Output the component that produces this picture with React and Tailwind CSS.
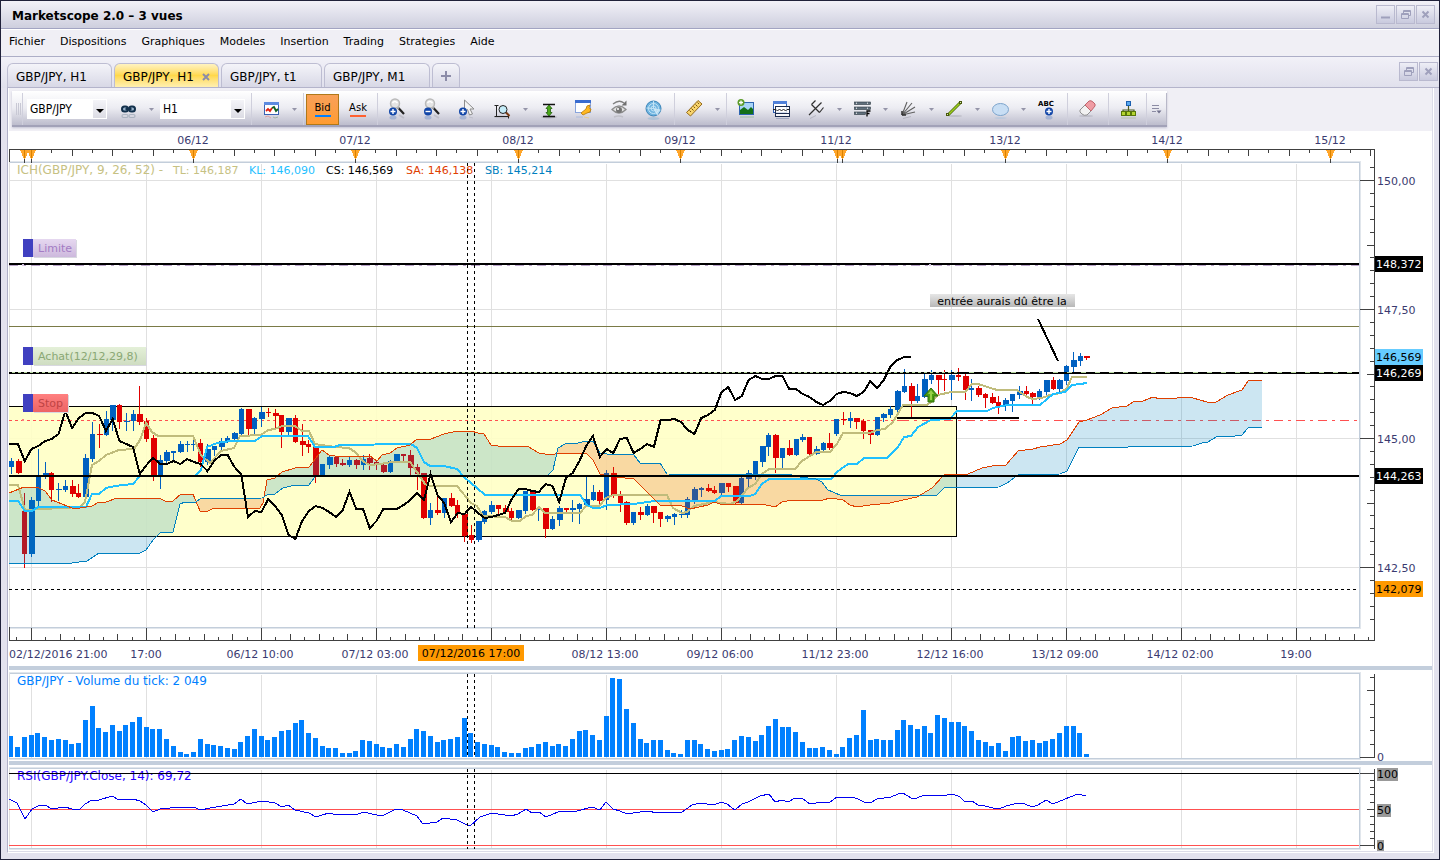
// src/App.jsx
import React from 'react';

const MENU = ['Fichier', 'Dispositions', 'Graphiques', 'Modeles', 'Insertion', 'Trading', 'Strategies', 'Aide'];

// Horizontal position of bar n, one bar per hour
const barX = (n) => 11.2 + 6.765 * n;

// colour, high, body top, body bottom, low
const CANDLES = `b 458 461 467 473|r 459 461 473 473|r 493 511 554 567|b 497 500 554 556|b 449 476 501 507|b 462 473 477 478|r 472 473 490 501|b 483 489 490 500|b 480 486 490 491|r 480 486 494 496|r 484 493 497 497|b 454 458 497 497|b 422 434 459 461|r 424 434 435 447|b 411 419 435 435|b 405 405 420 430|r 404 405 422 428|b 413 421 422 430|b 410 414 421 430|r 386 414 422 424|r 418 421 439 441|r 435 438 475 480|b 455 460 475 488|b 450 452 461 463|b 451 451 453 461|b 441 444 452 452|b 441 444 445 451|b 440 444 445 450|r 439 443 462 466|b 444 449 462 464|b 446 446 450 455|b 438 441 447 451|b 436 438 441 442|b 432 433 439 440|b 408 409 434 434|r 409 409 429 435|b 417 418 429 433|b 407 412 419 426|r 408 412 413 416|r 409 413 416 428|r 415 415 432 447|b 418 418 432 435|r 415 418 442 442|r 424 441 445 455|r 440 444 447 452|r 447 447 475 482|b 464 464 475 475|b 456 457 465 468|r 456 457 464 466|r 459 463 465 465|b 457 460 465 466|r 459 460 465 468|b 455 459 465 469|r 454 458 463 469|r 460 462 464 469|r 464 465 472 472|b 460 461 472 472|b 454 454 461 462|r 454 454 456 461|r 450 455 468 474|r 464 467 474 489|r 473 473 518 518|b 503 510 518 524|r 494 510 513 514|b 498 498 513 517|r 493 498 506 506|r 500 505 514 517|r 514 514 536 541|r 525 535 540 542|b 521 521 540 541|b 510 511 522 523|b 501 505 512 513|r 505 505 509 513|r 505 508 512 513|r 508 511 518 519|b 510 510 518 518|b 491 491 511 513|r 490 492 510 510|b 508 509 510 520|r 508 508 529 537|b 516 519 529 529|b 506 508 520 525|r 508 508 510 512|b 500 508 510 521|b 503 504 509 523|b 476 499 505 506|b 485 492 500 500|r 490 492 501 505|b 470 473 500 509|r 467 473 495 497|r 491 495 503 511|r 501 502 523 524|b 512 512 523 524|r 507 512 515 519|b 504 506 515 515|r 506 506 513 522|r 512 512 519 526|b 515 516 519 521|b 513 514 517 524|b 510 514 515 517|b 497 499 515 517|b 487 489 500 503|b 487 488 490 496|r 484 488 491 491|r 486 490 493 493|b 483 483 493 496|r 483 483 487 491|r 486 486 503 504|b 475 478 503 503|b 470 473 479 486|b 461 461 476 479|b 446 446 462 466|b 433 435 447 455|r 434 435 458 472|b 448 448 458 467|r 440 448 455 455|b 439 439 455 455|b 434 437 440 441|r 437 437 454 454|b 446 449 454 454|b 442 443 450 450|r 433 443 448 449|b 419 419 434 435|r 412 419 420 424|b 412 418 421 427|r 418 418 422 428|r 419 421 431 438|r 430 430 435 443|b 417 417 435 435|b 413 414 418 421|b 406 409 415 417|b 390 391 410 414|b 369 386 392 392|r 383 386 401 416|b 384 396 401 402|b 373 379 397 397|b 370 375 380 383|r 375 375 380 394|r 370 379 380 390|b 370 375 380 399|r 368 375 377 380|r 374 376 390 399|b 379 388 390 400|r 386 388 395 396|r 393 394 398 407|r 393 397 403 403|r 396 402 406 413|b 398 400 405 410|b 394 394 401 411|b 386 391 395 398|r 386 391 394 395|r 392 393 397 403|b 389 391 397 399|b 380 380 392 395|r 377 380 389 389|b 379 380 389 391|b 365 366 381 384|b 352 360 367 372|b 353 356 361 365|r 356 356 358 359`
  .split('|')
  .map((row) => {
    const [tone, ...v] = row.split(' ');
    return [tone, ...v.map(Number)];
  });

const VOLUME = [
  21, 10, 20, 22, 24, 20, 17, 18, 17, 13, 14, 37, 51, 29, 25, 32, 26, 32, 35, 40, 30, 28, 28, 18, 11, 5, 3, 5, 18, 13,
  12, 11, 9, 8, 15, 21, 28, 21, 17, 20, 26, 27, 34, 37, 24, 19, 11, 9, 9, 4, 4, 6, 17, 16, 13, 10, 9, 13, 10, 18, 28,
  26, 21, 15, 17, 18, 20, 39, 24, 15, 13, 12, 10, 5, 4, 4, 9, 10, 13, 15, 11, 13, 11, 18, 26, 27, 22, 17, 41, 79, 78,
  48, 34, 18, 14, 17, 17, 7, 4, 3, 17, 17, 13, 8, 6, 7, 8, 17, 21, 20, 16, 22, 31, 38, 30, 30, 25, 15, 9, 9, 10, 7, 3,
  10, 19, 22, 47, 17, 18, 17, 17, 27, 37, 32, 28, 31, 24, 42, 39, 35, 35, 31, 26, 17, 15, 11, 14, 6, 20, 21, 16, 17,
  14, 16, 18, 24, 31, 31, 24, 3,
];

const CHIKOU = [
  444, 444, 461, 449, 446, 441, 439, 434, 411, 428, 418, 413, 413, 416, 431, 419, 441, 444, 447, 474, 465, 458, 464,
  464, 461, 464, 459, 462, 464, 471, 461, 455, 455, 467, 474, 517, 511, 512, 499, 506, 515, 535, 539, 521, 511, 506,
  508, 512, 517, 510, 492, 509, 509, 528, 521, 509, 509, 509, 505, 500, 493, 500, 474, 495, 503, 522, 513, 514, 507,
  513, 518, 517, 515, 513, 499, 489, 489, 491, 492, 484, 486, 502, 478, 473, 461, 446, 436, 457, 449, 453, 439, 438,
  453, 449, 444, 447, 420, 420, 419, 422, 430, 434, 418, 415, 410, 392, 387, 400, 396, 380, 376, 379, 379, 376, 376,
  389, 389, 394, 397, 402, 405, 401, 394, 392, 393, 396, 392, 381, 388, 380, 366, 360, 357, 357,
];

const parse = (s) => s.split(' ').map((p) => p.split(',').map(Number));

const TENKAN = parse('9,485 18,485 25,510 80,507 85,502 92,465 99,461 106,455 119,450 134,449 140,440 146,423 152,432 158,436 193,436 201,455 210,463 221,451 234,448 240,436 261,435 268,430 275,429 282,426 295,426 302,431 309,431 315,444 335,447 349,448 355,452 364,462 370,465 380,464 392,462 410,462 417,472 425,484 430,486 457,486 471,503 477,506 483,516 505,517 512,521 520,521 526,516 532,515 539,507 545,513 580,513 586,506 599,506 606,498 613,495 667,495 673,508 682,513 687,512 694,506 714,502 730,504 737,501 743,494 748,488 755,484 762,474 769,469 795,469 802,461 810,456 816,452 830,452 837,444 843,433 870,433 877,430 885,429 893,422 903,405 927,405 931,402 938,395 951,392 965,392 972,384 978,384 997,390 1017,390 1027,397 1033,399 1042,398 1050,395 1060,393 1067,388 1072,377 1087,377');
const KIJUN = parse('9,501 18,501 25,511 32,511 38,507 86,507 92,494 99,494 106,488 115,486 133,484 140,476 195,476 201,470 207,447 217,443 230,441 255,441 262,436 308,436 315,447 334,447 340,445 411,444 417,448 424,462 430,466 444,466 457,469 464,477 477,488 485,495 580,495 587,505 593,508 600,508 607,505 634,504 654,501 715,501 721,496 750,496 755,494 762,484 769,479 831,479 837,472 848,464 857,464 864,458 887,458 893,452 898,447 904,437 911,436 918,427 931,420 950,419 957,411 987,411 993,408 1007,405 1040,405 1053,394 1065,392 1072,385 1080,384 1087,383');
const SPAN_A = parse('9,493 24,487 37,487 45,491 52,500 72,508 80,508 92,506 99,502 106,502 117,498 159,498 167,502 173,501 181,494 193,494 200,511 208,511 214,508 260,508 263,503 267,480 275,478 282,472 295,468 309,467 322,450 329,455 335,456 370,456 377,461 382,455 390,453 397,448 410,445 417,439 431,439 444,434 457,431 471,431 478,433 484,434 491,445 498,446 527,446 539,453 545,454 555,454 586,453 593,460 600,474 607,476 634,479 650,495 660,505 682,506 690,509 708,505 714,502 720,504 762,504 775,507 782,502 792,500 823,500 830,498 843,500 850,505 857,507 870,505 890,503 903,500 917,497 932,488 944,475 968,474 982,468 992,466 1006,465 1018,451 1033,449 1040,447 1060,444 1067,440 1079,422 1087,420 1100,415 1112,408 1127,406 1133,402 1143,401 1153,397 1160,399 1167,398 1172,399 1182,397 1193,398 1207,402 1216,402 1228,395 1242,390 1248,381 1262,380');
const SPAN_B = parse('9,563 72,563 87,561 99,553 140,553 146,550 153,540 160,533 173,532 180,504 185,502 196,502 200,499 262,498 267,495 275,494 283,488 295,485 309,485 315,477 322,476 548,475 553,470 558,448 565,444 578,443 586,441 593,441 600,453 607,454 634,455 640,463 660,463 667,474 792,475 800,477 816,479 822,482 828,490 840,495 937,495 944,488 999,487 1007,483 1018,475 1060,474 1067,471 1079,447 1128,447 1193,446 1202,443 1208,442 1216,437 1235,436 1242,435 1248,428 1262,427');
const RSI = parse('9,799 17,803 25,819 32,809 38,806 45,805 52,809 65,807 72,809 79,810 85,804 92,800 99,800 112,796 119,800 133,799 140,801 146,805 153,812 160,809 180,807 193,807 201,810 210,808 234,804 241,799 247,804 262,801 275,803 282,807 288,805 295,810 309,813 316,817 322,815 329,813 337,815 348,814 356,815 363,812 377,815 382,816 396,809 403,810 417,816 423,824 437,822 443,818 457,820 465,824 470,826 480,817 492,813 511,816 518,814 526,809 532,813 539,812 546,817 558,812 577,811 592,807 600,810 606,802 613,809 620,811 627,814 640,812 647,811 658,813 682,812 692,805 700,803 714,805 721,802 727,804 735,810 742,804 748,802 760,796 769,794 775,802 782,800 788,802 795,798 802,798 810,804 823,802 829,803 837,797 852,797 858,799 864,802 870,803 877,799 891,797 898,794 903,793 911,798 917,798 924,795 947,795 953,794 960,797 964,801 972,801 978,805 985,806 993,808 999,809 1006,806 1018,803 1025,804 1032,807 1038,805 1046,800 1053,804 1070,797 1078,794 1086,796');

// The cloud changes colour wherever the two spans cross
const CLOUD = [
  [9, 196, '#0080c0'],
  [196, 264, '#e04000'],
  [264, 556, '#0080c0'],
  [556, 921, '#e04000'],
  [921, 1262, '#0080c0'],
];

const GRID_X = [31, 146, 261, 376, 491, 606, 721, 836, 951, 1066, 1181, 1296];
const GRID_Y = [180, 309, 438, 567];

const DAYS = [
  [193, '06/12'], [355, '07/12'], [518, '08/12'], [680, '09/12'],
  [836, '11/12'], [1005, '13/12'], [1167, '14/12'], [1330, '15/12'],
];
const DAY_ANCHORS = [31, 193, 355, 518, 680, 842, 1005, 1167];
const DAY_MARKS = [24, 31, 193, 355, 518, 680, 837, 842, 1005, 1167, 1330];

const HOURS = [
  [146, '17:00'], [260, '06/12 10:00'], [375, '07/12 03:00'], [605, '08/12 13:00'], [720, '09/12 06:00'],
  [835, '11/12 23:00'], [950, '12/12 16:00'], [1065, '13/12 09:00'], [1180, '14/12 02:00'], [1296, '19:00'],
];

const toPoints = (pts) => pts.map((p) => p.join(',')).join(' ');

const yAt = (pts, x) => {
  for (let i = 1; i < pts.length; i++) {
    if (x <= pts[i][0]) {
      const [x0, y0] = pts[i - 1];
      const [x1, y1] = pts[i];
      return y0 + ((y1 - y0) * (x - x0)) / (x1 - x0);
    }
  }
  return pts[pts.length - 1][1];
};

const slice = (pts, from, to) => [
  [from, yAt(pts, from)],
  ...pts.filter(([x]) => x > from && x < to),
  [to, yAt(pts, to)],
];

const H = ({ y, x1 = 9, x2 = 1359, h = 1, color = '#e0e0e0' }) => (
  <rect x={x1} y={y} width={x2 - x1} height={h} fill={color} />
);

const V = ({ x, y1, y2, color = '#e0e0e0' }) => <rect x={x} y={y1} width={1} height={y2 - y1} fill={color} />;

const Frame = ({ top, bottom }) => (
  <g>
    <H y={top - 1} x2={1361} color="#e1e6ec" />
    <H y={top} x2={1360} color="#c3cedb" />
    <H y={bottom} x2={1360} color="#c3cedb" />
    <H y={bottom + 1} x2={1361} color="#e1e6ec" />
    <V x={1359} y1={top} y2={bottom} color="#c3cedb" />
    <V x={1360} y1={top - 1} y2={bottom + 1} color="#e1e6ec" />
    <V x={9} y1={top} y2={bottom} />
  </g>
);

const PriceTag = ({ y, bg, color, children }) => (
  <g>
    <rect x={1375} y={y} width={48} height={16} fill={bg} />
    <text x={1376} y={y + 12} fill={color}>{children}</text>
  </g>
);

const OrderTag = ({ y, width, fill, color, children }) => (
  <g>
    <rect x={34} y={y + 1} width={width} height={18} fill="#d8d8e0" />
    <rect x={23} y={y} width={10} height={18} fill="#4040c0" />
    <rect x={33} y={y} width={width} height={18} fill={fill} />
    <text x={38} y={y + 13} fill={color}>{children}</text>
  </g>
);

const Panel = ({ top, height, label, children }) => (
  <svg
    role="img"
    aria-label={label}
    viewBox={`9 ${top} 1423 ${height}`}
    className="block h-auto w-full overflow-visible bg-white text-[11px]"
    shapeRendering="crispEdges"
  >
    {children}
  </svg>
);

const AXIS = '#404040';

const TopAxis = () => (
  <g>
    <H y={149} x2={1375} color={AXIS} />
    <V x={9} y1={149} y2={162} color={AXIS} />
    {DAY_ANCHORS.map((a) =>
      [1, 2, 3, 4, 5, 6, 7].map((k) => (
        <V key={`${a}-${k}`} x={Math.round(a + k * 20.27)} y1={150} y2={k % 2 ? 153 : 156} color={AXIS} />
      ))
    )}
    <V x={1350} y1={150} y2={153} color={AXIS} />
    <V x={1370} y1={150} y2={156} color={AXIS} />
    {DAY_MARKS.map((x) => (
      <g key={x}>
        <path d={`M${x - 4} 150h9l-4 9h-1z`} fill="#ffa62b" />
        <V x={x} y1={150} y2={158} color="#d98200" />
        <V x={x} y1={159} y2={163} color={AXIS} />
      </g>
    ))}
    {DAYS.map(([x, label]) => (
      <text key={label} x={x} y={144} textAnchor="middle" fill="#3a3a70">{label}</text>
    ))}
  </g>
);

const BottomAxis = () => (
  <g>
    <H y={640} x2={1375} color={AXIS} />
    <V x={9} y1={627} y2={641} color={AXIS} />
    <V x={16} y1={637} y2={640} color={AXIS} />
    {GRID_X.map((x) => (
      <g key={x}>
        <V x={x} y1={628} y2={640} color={AXIS} />
        {[1, 2, 3, 4, 5, 6, 7]
          .filter((k) => x + k * 14.4 < 1374)
          .map((k) => (
            <V key={k} x={Math.round(x + k * 14.4)} y1={k % 2 ? 637 : 634} y2={640} color={AXIS} />
          ))}
      </g>
    ))}
    <text x={9} y={658} fill="#3a3a70">02/12/2016 21:00</text>
    {HOURS.map(([x, label]) => (
      <text key={label} x={x} y={658} textAnchor="middle" fill="#3a3a70">{label}</text>
    ))}
    <rect x={418} y={645} width={106} height={16} fill="#ff9900" />
    <text x={471} y={657} textAnchor="middle" fill="#000">07/12/2016 17:00</text>
  </g>
);

const PriceAxis = () => (
  <g>
    <V x={1374} y1={149} y2={641} color={AXIS} />
    {Array.from({ length: 36 }, (_, i) => {
      const k = i - 1;
      const left = k % 10 === 0 ? 1360 : k % 5 === 0 ? 1367 : 1370;
      return <H key={k} y={Math.round(180 + k * 12.9)} x1={left} x2={1374} color={AXIS} />;
    })}
    {['150,00', '147,50', '145,00', '142,50'].map((p, i) => (
      <text key={p} x={1377} y={GRID_Y[i] + 5} fill="#3a3a70">{p}</text>
    ))}
    <PriceTag y={256} bg="#000" color="#fff">148,372</PriceTag>
    <PriceTag y={349} bg="#66ccff" color="#000">146,569</PriceTag>
    <PriceTag y={365} bg="#000" color="#fff">146,269</PriceTag>
    <PriceTag y={468} bg="#000" color="#fff">144,263</PriceTag>
    <PriceTag y={581} bg="#ff9900" color="#000">142,079</PriceTag>
  </g>
);

const MainChart = () => (
  <Panel top={131} height={535} label="GBP/JPY H1">
    <defs>
      <linearGradient id="tagPurple" x1="0" y1="0" x2="0" y2="1">
        <stop offset="0" stopColor="#e6d8f0" />
        <stop offset="1" stopColor="#cdb9dd" />
      </linearGradient>
      <linearGradient id="tagGreen" x1="0" y1="0" x2="0" y2="1">
        <stop offset="0" stopColor="#e4f0d8" />
        <stop offset="1" stopColor="#cfddc2" />
      </linearGradient>
      <linearGradient id="tagRed" x1="0" y1="0" x2="0" y2="1">
        <stop offset="0" stopColor="#ff8080" />
        <stop offset="1" stopColor="#ec6464" />
      </linearGradient>
      <linearGradient id="tagGray" x1="0" y1="0" x2="0" y2="1">
        <stop offset="0" stopColor="#e6e6e6" />
        <stop offset="1" stopColor="#b8b8b8" />
      </linearGradient>
    </defs>

    {GRID_X.map((x) => <V key={x} x={x} y1={164} y2={628} />)}
    {GRID_Y.map((y) => <H key={y} y={y} />)}
    <Frame top={162} bottom={627} />

    <rect x={9} y={406} width={948} height={131} fill="#ffffc4" fillOpacity="0.88" />
    <H y={406} x2={957} color="#000" />
    <H y={536} x2={957} color="#000" />
    <V x={956} y1={406} y2={537} color="#000" />

    <line x1={9} x2={900} y1={420.5} y2={420.5} stroke="#ff5050" strokeDasharray="3 3" />
    <line x1={900} x2={1359} y1={420.5} y2={420.5} stroke="#ff5050" strokeDasharray="9 5 3 5" />

    {CANDLES.map(([tone, high, top, bottom, low], i) => {
      const x = Math.floor(barX(i) + 0.1);
      const color = tone === 'b' ? '#0060c0' : '#e00000';
      const left = Math.max(9, x - 2);
      return (
        <g key={i} fill={color}>
          <rect x={x} y={high} width={1} height={low - high + 1} />
          <rect x={left} y={top} width={x + 3 - left + (i % 2)} height={Math.max(1, bottom - top)} />
        </g>
      );
    })}

    {CLOUD.map(([from, to, color]) => (
      <polygon
        key={from}
        points={toPoints([...slice(SPAN_A, from, to), ...slice(SPAN_B, from, to).reverse()])}
        fill={color}
        fillOpacity="0.2"
      />
    ))}
    <g fill="none">
      <polyline points={toPoints(TENKAN)} stroke="#c0bc7c" strokeWidth="2" />
      <polyline points={toPoints(KIJUN)} stroke="#1fc0ff" strokeWidth="2" />
      <polyline points={toPoints(SPAN_A)} stroke="#e04000" />
      <polyline points={toPoints(SPAN_B)} stroke="#0080c0" />
      <polyline points={toPoints([[9, 444], ...CHIKOU.map((y, i) => [barX(i), y])])} stroke="#000" strokeWidth="2" />
    </g>

    <H y={263} h={2} color="#000" />
    <line x1={9} x2={1359} y1={265.5} y2={265.5} stroke="#b9a2c9" strokeDasharray="9 5 3 5" />
    <H y={326} color="#7a7a46" />
    <H y={372} color="#b4d49c" />
    <line x1={9} x2={960} y1={372.5} y2={372.5} stroke="#000" strokeDasharray="3 3" />
    <line x1={960} x2={1359} y1={372.5} y2={372.5} stroke="#000" strokeDasharray="9 5" />
    <H y={373} color="#000" />
    <H y={475} h={2} color="#000" />
    <H y={417} x1={897} x2={1019} h={2} color="#000" />
    <line x1={9} x2={1359} y1={589.5} y2={589.5} stroke="#000" strokeDasharray="3 3" />
    <line x1={467.5} x2={467.5} y1={163} y2={628} stroke="#000" strokeDasharray="3 3" />
    <line x1={474.5} x2={474.5} y1={163} y2={628} stroke="#000" strokeDasharray="3 3" />
    <line x1={1038} x2={1058} y1={319} y2={361} stroke="#000" strokeWidth="2" />

    <g fill="#fff" stroke="#d6c6e2">
      <circle cx={23} cy={265} r={1} />
      <circle cx={930} cy={265} r={1} />
      <circle cx={23} cy={420} r={1} stroke="#ff8080" />
    </g>

    <g shapeRendering="auto">
      <path d="M931 388l7 8h-4v6h-6v-6h-4z" fill="#4c9c10" stroke="#2f7008" />
      <path d="M931 390l3 4h-2v6h-2v-6h-2z" fill="#98d048" />
    </g>

    <rect x={930} y={294} width={145} height={13} fill="url(#tagGray)" />
    <text x={1002} y={305} textAnchor="middle" fill="#000">entrée aurais dû être la</text>

    <OrderTag y={239} width={43} fill="url(#tagPurple)" color="#a37cc4">Limite</OrderTag>
    <OrderTag y={347} width={113} fill="url(#tagGreen)" color="#8aa874">Achat(12/12,29,8)</OrderTag>
    <OrderTag y={394} width={35} fill="url(#tagRed)" color="#bf4444">Stop</OrderTag>

    <text x={17} y={174} className="text-[12px]" fill="#c6c183">ICH(GBP/JPY, 9, 26, 52) -</text>
    <text x={173} y={174} fill="#c6c183">TL: 146,187</text>
    <text x={249} y={174} fill="#1fc0ff">KL: 146,090</text>
    <text x={326} y={174} fill="#000">CS: 146,569</text>
    <text x={406} y={174} fill="#e04000">SA: 146,138</text>
    <text x={485} y={174} fill="#0080c0">SB: 145,214</text>

    <TopAxis />
    <BottomAxis />
    <PriceAxis />
  </Panel>
);

const VolumeChart = () => (
  <Panel top={670} height={91} label="Volume">
    {GRID_X.map((x) => <V key={x} x={x} y1={675} y2={759} />)}
    <Frame top={673} bottom={758} />
    {VOLUME.map((h, i) => {
      const left = Math.max(9, Math.floor(barX(i) - 0.3) - 2);
      return <rect key={i} x={left} y={757 - h} width={i === 0 ? 4 : 5} height={h} fill="#0080ff" />;
    })}
    <line x1={467.5} x2={467.5} y1={674} y2={758} stroke="#000" strokeDasharray="3 3" />
    <line x1={474.5} x2={474.5} y1={674} y2={758} stroke="#000" strokeDasharray="3 3" />
    <V x={1374} y1={674} y2={758} color={AXIS} />
    <H y={757} x1={1360} x2={1374} color={AXIS} />
    <H y={690} x1={1367} x2={1374} color={AXIS} />
    {[677, 704, 717, 730, 744].map((y) => <H key={y} y={y} x1={1370} x2={1374} color={AXIS} />)}
    <text x={1377} y={761} fill="#3a3a70">0</text>
    <text x={17} y={685} className="text-[12px]" fill="#0080ff">GBP/JPY - Volume du tick: 2 049</text>
  </Panel>
);

const RsiChart = () => (
  <Panel top={765} height={86} label="RSI">
    {GRID_X.map((x) => <V key={x} x={x} y1={770} y2={850} />)}
    <Frame top={768} bottom={848} />
    <text x={17} y={780} className="text-[12px]" fill="#2800ff">RSI(GBP/JPY.Close, 14): 69,72</text>
    <H y={773} color="#000" />
    <H y={809} color="#ff5050" />
    <H y={845} color="#ff5050" />
    <polyline points={toPoints(RSI)} fill="none" stroke="#0000f0" />
    <line x1={467.5} x2={467.5} y1={769} y2={849} stroke="#000" strokeDasharray="3 3" />
    <line x1={474.5} x2={474.5} y1={769} y2={849} stroke="#000" strokeDasharray="3 3" />
    <V x={1374} y1={769} y2={849} color={AXIS} />
    {[773, 845].map((y) => <H key={y} y={y} x1={1360} x2={1374} color={AXIS} />)}
    <H y={809} x1={1367} x2={1374} color={AXIS} />
    {[780, 787, 794, 802, 816, 824, 831, 838].map((y) => (
      <H key={y} y={y} x1={1370} x2={1374} color={AXIS} />
    ))}
    <rect x={1377} y={768} width={21} height={13} fill="#999" />
    <rect x={1377} y={804} width={14} height={13} fill="#999" />
    <rect x={1377} y={840} width={7} height={11} fill="#999" />
    <text x={1377} y={778}>100</text>
    <text x={1377} y={814}>50</text>
    <text x={1377} y={850}>0</text>
  </Panel>
);

/* ---- toolbar icons ---- */

const Icon = ({ children }) => (
  <svg viewBox="0 0 21 22" className="h-[22px] w-[21px]" fill="none" aria-hidden="true">
    {children}
  </svg>
);

const Badge = ({ x, y, minus }) => (
  <g>
    <ellipse cx={x} cy={y + 6} rx={3.5} ry={2} fill="#7c98cc" opacity="0.5" />
    <circle cx={x} cy={y} r={4} fill="#1246a8" />
    <path d={`M${x - 2.5} ${y}h5${minus ? '' : `M${x} ${y - 2.5}v5`}`} stroke="#fff" strokeWidth="1.4" />
  </g>
);

const Magnifier = ({ minus }) => (
  <Icon>
    <path d="M12 17l5 3" stroke="#b0b0bc" strokeWidth="2" opacity="0.6" />
    <path d="M11 9.500l6 6.500" stroke="#222" strokeWidth="2.200" />
    <path d="M10 8.500l2 2" stroke="#a0a0a0" strokeWidth="2.500" />
    <circle cx="8" cy="5.500" r="4.500" fill="#e4e4e4" stroke="#bababa" strokeWidth="1.500" />
    <path d="M5.500 5q2-3 5 0" stroke="#fff" strokeWidth="1.500" />
    <Badge x={6} y={13.5} minus={minus} />
  </Icon>
);

const LinkIcon = () => (
  <Icon>
    <g stroke="#12304c" strokeWidth="2">
      <rect x="4" y="8.500" width="6" height="5" rx="2.500" fill="#9ab4cc" />
      <rect x="11" y="8.500" width="6" height="5" rx="2.500" fill="#9ab4cc" />
      <path d="M7.500 11h6" />
    </g>
    <g stroke="#8898a8" strokeWidth="1.200" opacity="0.55">
      <rect x="4" y="16.500" width="6" height="3" rx="1.500" />
      <rect x="11" y="16.500" width="6" height="3" rx="1.500" />
    </g>
  </Icon>
);

const ChartIcon = () => (
  <Icon>
    <rect x="3.500" y="4.500" width="14" height="12" fill="#fff" stroke="#3a62b4" />
    <path d="M3 4h15v3H3z" fill="#5c8ae0" />
    <path d="M5 13l2-2 2 2 2-3" stroke="#e02010" strokeWidth="1.800" />
    <path d="M11 10l2-1 2 4 2-2" stroke="#106020" strokeWidth="1.800" />
    <path d="M4 19l3-1 3 2" stroke="#e08080" opacity="0.6" />
    <path d="M12 19l2 1 3-1" stroke="#80a080" opacity="0.6" />
  </Icon>
);

const CursorIcon = () => (
  <Icon>
    <path d="M7.500 2v12l3-2.500 2 5.500 3-1-2.500-5h4z" fill="#f4f4f4" stroke="#8c8c8c" />
    <path d="M12 19l4 1" stroke="#b0b0bc" opacity="0.6" />
    <Badge x={6} y={13.5} />
  </Icon>
);

const AxisZoomIcon = () => (
  <Icon>
    <ellipse cx="10" cy="19" rx="8" ry="1.500" fill="#a8a8b4" opacity="0.5" />
    <path d="M4.500 7v11M2.500 7.500h4M2.500 18.500h14M16.500 16.500v4" stroke="#222" />
    <path d="M13.500 14l4 4" stroke="#7a3a10" strokeWidth="2" />
    <circle cx="11" cy="11.500" r="4" fill="#c4ecf8" stroke="#222" />
  </Icon>
);

const FitIcon = () => (
  <Icon>
    <ellipse cx="11" cy="19" rx="8" ry="1.500" fill="#a0a0ac" opacity="0.6" />
    <path d="M5 6.500h12M5 18.500h12" stroke="#111" strokeWidth="1.500" />
    <path d="M11 7l3 3.500h-1.500v4H14L11 18l-3-3.500h1.500v-4H8z" fill="#4aa818" stroke="#206008" strokeWidth="0.800" />
  </Icon>
);

const SettingsIcon = () => (
  <Icon>
    <rect x="2.500" y="2.500" width="15" height="12" fill="#fff" stroke="#88a4dc" />
    <path d="M2 2h16v3H2z" fill="#3a6cd0" />
    <path d="M8 15l5-4q0-4 4-4l-1 3 2 1q0 4-4 4l-4 2z" fill="#ffb820" stroke="#b87808" strokeWidth="0.800" />
    <path d="M3 19h7" stroke="#9cb0dc" opacity="0.7" />
    <path d="M11 19l5 1" stroke="#f0c870" opacity="0.7" />
  </Icon>
);

const EyeIcon = () => (
  <Icon>
    <path d="M4 11.500q7-7 14 0-7 7-14 0z" fill="#e2e2e2" stroke="#8c8c8c" strokeWidth="1.300" />
    <circle cx="11" cy="12" r="3" fill="#747474" />
    <circle cx="10" cy="11" r="1" fill="#fff" />
    <path d="M5 6q6-5 11-1" stroke="#808080" strokeWidth="1.300" />
    <path d="M18.500 2.500v5h-5z" fill="#707070" />
    <path d="M6 19q5-2 9 0" stroke="#b0b0b8" strokeWidth="1.500" opacity="0.6" />
  </Icon>
);

const GlobeIcon = () => (
  <Icon>
    <circle cx="10.500" cy="10.500" r="7.500" fill="#6eb4e0" stroke="#3a84b8" />
    <g stroke="#c4e4f6">
      <circle cx="10.500" cy="10.500" r="5" />
      <circle cx="10.500" cy="10.500" r="2.500" />
      <path d="M10.500 10.500V3M10.500 10.500L17.500 12M10.500 10.500L14.500 17M10.500 10.500L3.500 10" />
    </g>
    <path d="M10.500 10.500L17.500 12l-3 5z" fill="#d8eefa" opacity="0.7" />
    <ellipse cx="10.500" cy="20.500" rx="6" ry="1.500" fill="#90b8d4" opacity="0.5" />
  </Icon>
);

const RulerIcon = () => (
  <Icon>
    <path d="M2.500 14.500l11.500-12 4 3.500L6.500 18z" fill="#f8d46c" stroke="#94691a" />
    <path d="M5.500 12.500l1.500 1.500M7.500 10.500l2 2M9.500 8.500l1.500 1.500M11.500 6.500l2 2M13.500 4.500l1.500 1.500" stroke="#7a5410" />
  </Icon>
);

const PictureIcon = () => (
  <Icon>
    <rect x="3.500" y="4.500" width="14" height="12" fill="#a8d4f8" stroke="#2c64b0" />
    <path d="M4 16v-4l4-3 4 3 3-3 2 2v5z" fill="#147018" />
    <circle cx="5" cy="4.500" r="3.500" fill="#5c9c28" />
    <path d="M3 4.500h4M5 2.500v4" stroke="#fff" strokeWidth="1.300" />
    <path d="M4 19h14" stroke="#80b080" opacity="0.6" />
  </Icon>
);

const WindowsIcon = () => (
  <Icon>
    <rect x="2.500" y="3.500" width="13" height="11" fill="#fff" stroke="#2c5cb0" />
    <path d="M2 3h14v3H2z" fill="#5080d8" />
    <rect x="4.500" y="8.500" width="14" height="10" fill="#fff" fillOpacity="0.8" stroke="#1c2c50" />
    <path d="M2 11.500h3l1.500 1.500 2-2 2 2 2-2 2 2 1.500-1.500h2.500" stroke="#222" />
    <path d="M5 15.500h13" stroke="#1c2c50" />
    <path d="M5 20.500h13" stroke="#8090b0" opacity="0.6" />
  </Icon>
);

// Thin diagonal tines crossed by one median line
const PitchforkIcon = () => (
  <Icon>
    <path d="M3 17L14.500 5.500M5.500 6.500l8 8M5.500 6.500L9.500 2.500M9.500 10.500l6-6M13.500 14.500l4-5" stroke="#303030" strokeWidth="1.200" />
    <path d="M4 20.500l6-3" stroke="#a0a0ac" opacity="0.6" />
  </Icon>
);

const FibIcon = () => (
  <Icon>
    <g fill="#60707c" stroke="#2c3840" strokeWidth="0.600">
      <rect x="2.500" y="4" width="16" height="2.500" />
      <rect x="2.500" y="9" width="16" height="2.500" />
      <rect x="2.500" y="14" width="11" height="2.500" />
    </g>
    <path d="M4 5.200h1M15 5.200h1M4 10.200h1M15 10.200h1M4 15.200h1" stroke="#fff" />
    <path d="M15 18.500v-5.500h3.500M15 15.500h2.500" stroke="#000" strokeWidth="1.300" />
  </Icon>
);

const FanIcon = () => (
  <Icon>
    <path d="M4 17L9 4M4 17L14 5M4 17L17 9M4 17l13-3" stroke="#606060" strokeWidth="1.100" />
    <path d="M4 17v-4M4 17h4" stroke="#303030" strokeWidth="1.500" />
    <path d="M5 20.500l8-2" stroke="#a0a0ac" opacity="0.6" />
  </Icon>
);

const LineIcon = () => (
  <Icon>
    <ellipse cx="11" cy="18" rx="7" ry="1" fill="#a8a8b4" opacity="0.5" />
    <path d="M4 17L16 5" stroke="#4c6c08" strokeWidth="3" />
    <path d="M4 17L16 5" stroke="#9ccc20" strokeWidth="1.600" />
    <rect x="2.500" y="15.500" width="2" height="2" fill="#dcecb0" stroke="#48580c" />
    <rect x="15.500" y="3.500" width="2" height="2" fill="#dcecb0" stroke="#48580c" />
  </Icon>
);

const EllipseIcon = () => (
  <Icon>
    <ellipse cx="10.500" cy="11.500" rx="8" ry="6" fill="#c8def4" stroke="#7ca4cc" />
    <ellipse cx="10.500" cy="20" rx="6" ry="1" fill="#b0c4dc" opacity="0.6" />
  </Icon>
);

const TextIcon = () => (
  <svg viewBox="0 0 21 22" className="h-[22px] w-[21px] overflow-visible" aria-hidden="true">
    <text x="10" y="8" textAnchor="middle" className="text-[7px] font-bold" fill="#000">ABC</text>
    <Badge x={13} y={13.5} />
  </svg>
);

const EraserIcon = () => (
  <Icon>
    <ellipse cx="9" cy="18" rx="7" ry="1" fill="#a8a8b4" opacity="0.5" />
    <path d="M8 7l6 6-4 4q-3 1-5-1-3-2-2-4z" fill="#f2f2f2" stroke="#909090" />
    <path d="M8 7l4-4q2-1 4 1 3 2 2 4l-4 5z" fill="#f09ca4" stroke="#c0646c" />
  </Icon>
);

const TreeIcon = () => (
  <Icon>
    <path d="M10.500 8v4M5 14v-2h11v2M10.500 12v2" stroke="#4c5c20" strokeWidth="1.200" />
    <rect x="8.500" y="3.500" width="4" height="4" fill="#58a8f0" stroke="#1c60b0" />
    <g fill="#b4d430" stroke="#587808">
      <rect x="3.500" y="13.500" width="4" height="4" />
      <rect x="8.500" y="13.500" width="4" height="4" />
      <rect x="13.500" y="13.500" width="4" height="4" />
    </g>
    <path d="M3 20h15" stroke="#a8b888" opacity="0.6" />
  </Icon>
);

/* ---- toolbar parts ---- */

const Sep = () => <span className="mr-[2px] ml-[3px] w-px self-stretch bg-[#cfcfdc]" />;

const Tool = ({ label, children }) => (
  <button type="button" aria-label={label} className="flex h-8 w-[35px] items-center justify-center">
    {children}
  </button>
);

const Drop = ({ label }) => (
  <button type="button" aria-label={label} className="flex h-8 w-[11px] items-center justify-center">
    <svg viewBox="0 0 5 3" className="h-[3px] w-[5px]" aria-hidden="true">
      <path d="M0 0h5L2.500 3z" fill="#9494a8" />
    </svg>
  </button>
);

const Combo = ({ label, value, className }) => (
  <div className={`relative h-5 ${className}`}>
    <select
      aria-label={label}
      defaultValue={value}
      className="h-full w-full appearance-none bg-white pl-[3px] font-['DejaVu_Sans_Condensed','DejaVu_Sans',sans-serif] text-[12px] text-black"
    >
      <option>{value}</option>
    </select>
    <span className="pointer-events-none absolute top-px right-px bottom-px flex w-[13px] items-center justify-center bg-linear-to-b from-[#f4f4f8] to-[#dcdce4]">
      <svg viewBox="0 0 8 4" className="mt-1 h-1 w-2" aria-hidden="true">
        <path d="M0 0h8L4 4z" fill="#000" />
      </svg>
    </span>
  </div>
);

const Toolbar = () => (
  <div className="ml-[3px] flex h-9 w-fit items-center border-b-2 border-[#a2a2b8] bg-linear-to-b from-white via-[#ececf2] to-[#bdbdcd] pt-[2px] shadow-[0_1px_2px_#c4c4d4]">
    <span className="flex w-[10px] justify-center gap-px pl-[3px]">
      <i className="h-3 w-px bg-[#c8c8d4]" />
      <i className="h-3 w-px bg-[#c8c8d4]" />
      <i className="h-3 w-px bg-[#c8c8d4]" />
    </span>
    <span className="mr-1 w-px self-stretch bg-[#cfcfdc]" />
    <Combo label="Instrument" value="GBP/JPY" className="mr-1 w-20" />
    <Tool label="Lier"><LinkIcon /></Tool>
    <Drop label="Options de lien" />
    <Combo label="Période" value="H1" className="mr-[3px] ml-[3px] w-[85px]" />
    <Sep />
    <Tool label="Type de graphique"><ChartIcon /></Tool>
    <Drop label="Types" />
    <Sep />
    <button
      type="button"
      aria-pressed="true"
      className="flex h-[31px] w-[33px] flex-col items-center justify-center border border-[#b07818] bg-linear-to-b from-[#f8a058] to-[#ff9c30] text-[10px] leading-3 text-black"
    >
      Bid
      <i className="mt-px h-[2px] w-4 bg-[#0080ff]" />
    </button>
    <button
      type="button"
      aria-pressed="false"
      className="flex h-[31px] w-[38px] flex-col items-center justify-center text-[10px] leading-3 text-black"
    >
      Ask
      <i className="mt-px h-[2px] w-4 bg-[#ff6030]" />
    </button>
    <span className="mr-[2px] w-px self-stretch bg-[#cfcfdc]" />
    <Tool label="Zoom avant"><Magnifier /></Tool>
    <Tool label="Zoom arrière"><Magnifier minus /></Tool>
    <Tool label="Curseur"><CursorIcon /></Tool>
    <Tool label="Zoom des axes"><AxisZoomIcon /></Tool>
    <Drop label="Options de zoom" />
    <Tool label="Ajuster"><FitIcon /></Tool>
    <Tool label="Propriétés"><SettingsIcon /></Tool>
    <Tool label="Afficher"><EyeIcon /></Tool>
    <Tool label="Radar"><GlobeIcon /></Tool>
    <Sep />
    <Tool label="Règle"><RulerIcon /></Tool>
    <Drop label="Options de règle" />
    <Sep />
    <Tool label="Ajouter une image"><PictureIcon /></Tool>
    <Tool label="Vues"><WindowsIcon /></Tool>
    <Tool label="Fourchette"><PitchforkIcon /></Tool>
    <Drop label="Fourchettes" />
    <Tool label="Fibonacci"><FibIcon /></Tool>
    <Drop label="Outils Fibonacci" />
    <Tool label="Éventail"><FanIcon /></Tool>
    <Drop label="Éventails" />
    <Tool label="Ligne"><LineIcon /></Tool>
    <Drop label="Lignes" />
    <Tool label="Ellipse"><EllipseIcon /></Tool>
    <Drop label="Formes" />
    <Tool label="Texte"><TextIcon /></Tool>
    <Sep />
    <Tool label="Effacer"><EraserIcon /></Tool>
    <Sep />
    <Tool label="Arborescence"><TreeIcon /></Tool>
    <span className="w-px self-stretch bg-[#cfcfdc]" />
    <button type="button" aria-label="Plus" className="flex h-8 w-5 items-center justify-center border-r border-[#b8b8c8]">
      <svg viewBox="0 0 10 10" className="size-[10px]" fill="none" aria-hidden="true">
        <path d="M0 1.500h7M0 4.500h7M0 7.500h4" stroke="#8c8ca4" />
        <path d="M4.500 6.500h5L7 9.500z" fill="#70708c" />
      </svg>
    </button>
  </div>
);

/* ---- window chrome ---- */

const WindowButton = ({ label, children }) => (
  <button
    type="button"
    aria-label={label}
    className="flex size-[19px] items-center justify-center border border-[#b9b9cf] bg-linear-to-b from-[#eeeef6] to-[#c9cade]"
  >
    <svg viewBox="0 0 11 11" className="size-[11px]" fill="none" stroke="#9fa0bc" strokeWidth="2" aria-hidden="true">
      {children}
    </svg>
  </button>
);

const RestoreGlyph = () => <path d="M3.500 4V1.500h7v5H8.500M1.500 4.500h7v5h-7zM1.500 5.500h7M3.500 2.500h7" strokeWidth="1" />;
const CloseGlyph = () => <path d="M2.500 2.500l6 6M8.500 2.500l-6 6" />;

const Tab = ({ children, active, className }) => (
  <button
    type="button"
    role="tab"
    aria-selected={!!active}
    className={`flex h-6 items-center rounded-t-md border border-b-0 border-[#bdbdd2] pt-[2px] pl-2 text-[12px] ${
      active ? 'bg-linear-to-b from-[#fff3c0] via-[#ffd84a] to-[#fff0b0]' : 'bg-linear-to-b from-[#f4f4f9] to-[#d8d8e6]'
    } ${className}`}
  >
    {children}
  </button>
);

const App = () => (
  <div className="flex min-h-screen w-full flex-col border border-[#20213a] bg-[#e3e2ee] font-['DejaVu_Sans',Verdana,sans-serif] text-[11px] text-black">
    <header className="flex h-7 items-center justify-between border-b border-[#a2a4c2] bg-linear-to-b from-[#f2f1f8] to-[#cecfde] pr-1 pl-[11px]">
      <h1 className="pt-[2px] text-[12px] font-bold">Marketscope 2.0 – 3 vues</h1>
      <div className="flex gap-px">
        <WindowButton label="Réduire"><path d="M1 8.500h9" /></WindowButton>
        <WindowButton label="Restaurer"><RestoreGlyph /></WindowButton>
        <WindowButton label="Fermer"><CloseGlyph /></WindowButton>
      </div>
    </header>

    <nav className="flex h-7 items-center gap-[15px] border-t border-b border-t-white border-b-[#adaec7] bg-[#f0eff5] pb-px pl-2">
      {MENU.map((m) => <a key={m} href="#">{m}</a>)}
    </nav>

    <div className="flex h-[31px] items-end justify-between bg-linear-to-b from-[#f2f1f8] to-[#e0e0ec] pl-[6px]">
      <div role="tablist" className="flex flex-1 items-end gap-[2px] border-b border-[#b4b4cb]">
        <Tab className="w-[105px]">GBP/JPY, H1</Tab>
        <Tab active className="w-[105px] justify-between pr-2">
          GBP/JPY, H1
          <svg viewBox="0 0 8 8" className="size-2" stroke="#8c8ca8" strokeWidth="2" aria-hidden="true">
            <path d="M1 1l6 6M7 1L1 7" />
          </svg>
        </Tab>
        <Tab className="w-[101px]">GBP/JPY, t1</Tab>
        <Tab className="w-[106px]">GBP/JPY, M1</Tab>
        <button
          type="button"
          aria-label="Nouvel onglet"
          className="flex h-6 w-7 items-center justify-center rounded-t-md border border-b-0 border-[#bdbdd2] bg-linear-to-b from-[#f4f4f9] to-[#d8d8e6]"
        >
          <svg viewBox="0 0 10 10" className="size-[10px]" stroke="#8c8ca8" strokeWidth="2" aria-hidden="true">
            <path d="M0 5h10M5 0v10" />
          </svg>
        </button>
      </div>
      <div className="flex gap-px self-stretch border-b border-[#b4b4cb] pt-[5px] pr-px">
        <WindowButton label="Restaurer la vue"><RestoreGlyph /></WindowButton>
        <WindowButton label="Fermer la vue"><CloseGlyph /></WindowButton>
      </div>
    </div>

    <main className="mr-[5px] ml-[6px] border-r border-b border-l border-white border-l-[#b0b0c8]">
      <div className="border-r border-b border-l border-[#dcdce8] border-l-white">
        <div className="h-[43px] bg-[#f0eff5] pt-[3px]">
          <Toolbar />
        </div>
        <MainChart />
        <div className="h-1 bg-[#c3cedc]" />
        <VolumeChart />
        <div className="h-1 bg-[#c3cedc]" />
        <RsiChart />
      </div>
    </main>
  </div>
);

export default App;
